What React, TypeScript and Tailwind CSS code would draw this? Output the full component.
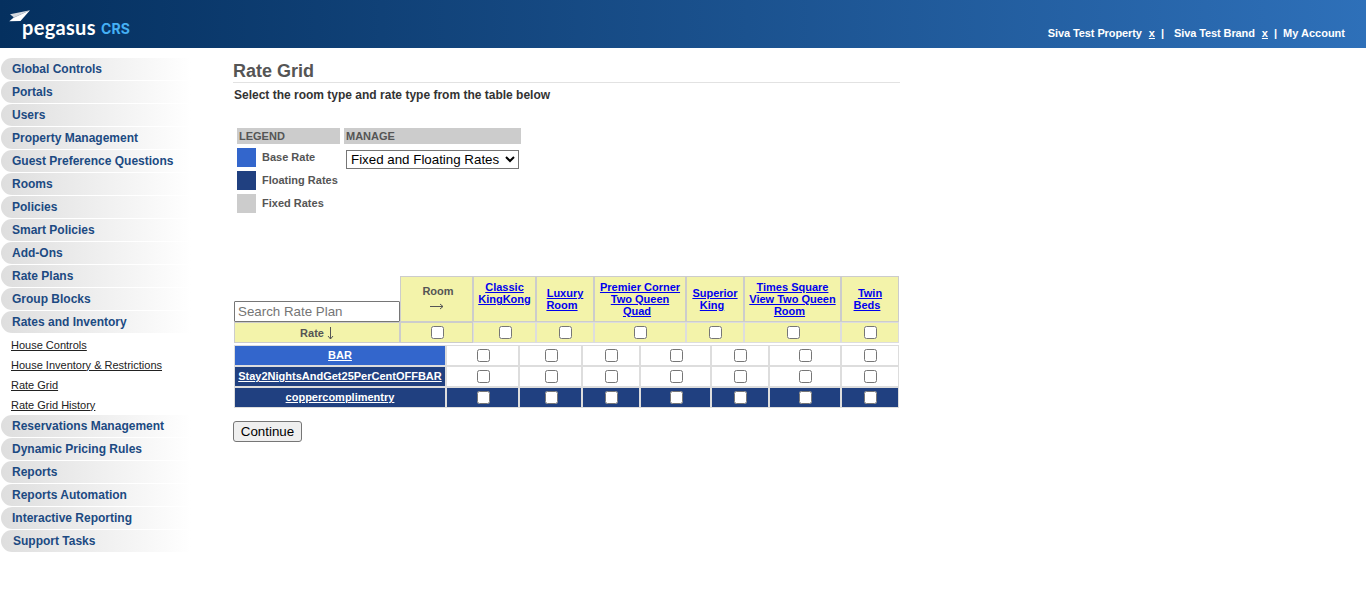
import React from "react";

const menuTop = [
  "Global Controls",
  "Portals",
  "Users",
  "Property Management",
  "Guest Preference Questions",
  "Rooms",
  "Policies",
  "Smart Policies",
  "Add-Ons",
  "Rate Plans",
  "Group Blocks",
  "Rates and Inventory",
];
const subMenu = ["House Controls", "House Inventory & Restrictions", "Rate Grid", "Rate Grid History"];
const menuBottom = [
  "Reservations Management",
  "Dynamic Pricing Rules",
  "Reports",
  "Reports Automation",
  "Interactive Reporting",
];

const rooms = [
  { lines: ["Classic", "KingKong"], box: "pb-[12px]", last: "" },
  { lines: ["Luxury", "Room"], box: "", last: "mr-[6px]" },
  { lines: ["Premier Corner", "Two Queen", "Quad"], box: "", last: "mr-[6px]" },
  { lines: ["Superior", "King"], box: "", last: "mr-[6px]" },
  { lines: ["Times Square", "View Two Queen", "Room"], box: "", last: "mr-[6px]" },
  { lines: ["Twin", "Beds"], box: "", last: "mr-[6px]" },
];

const plans = [
  { name: "BAR", head: "bg-[#3366cc]", cell: "bg-white" },
  { name: "Stay2NightsAndGet25PerCentOFFBAR", head: "bg-[#204080]", cell: "bg-white" },
  { name: "coppercomplimentry", head: "bg-[#204080]", cell: "bg-[#204080]" },
];

function MenuItem({ label, pad = "pl-[11px]" }: { label: string; pad?: string }) {
  return (
    <li className={`mb-px ml-px flex h-[22px] items-center rounded-l-[11px] bg-linear-to-r from-[#dedede] to-white to-[190px] text-[12px] font-bold text-[#1c4a82] ${pad}`}>
      {label}
    </li>
  );
}

function Check() {
  return <input type="checkbox" className="m-0 block h-[13px] w-[13px]" />;
}

function Logo() {
  return (
    <svg width="140" height="48" viewBox="0 0 140 48">
      <path d="M10 14.2L30 10.2L14 17.5Z" fill="#d4d8de" />
      <path d="M30 10.2L14 17.3L9.3 21.3L20.5 21Z" fill="#ffffff" />
      <path d="M30 10.2L14 17.3L12.5 18.6Z" fill="#9aa6b8" />
      <text x="22" y="34.5" fill="#fff" className="font-['Lato',sans-serif] text-[20px] font-bold" textLength="73.5">pegasus</text>
      <text x="101" y="34" fill="#45b0f5" className="font-['Inter',sans-serif] text-[14px] font-bold" textLength="29">CRS</text>
    </svg>
  );
}

export default function App() {
  return (
    <div className="h-[613px] w-[1366px] overflow-hidden bg-white font-['Liberation_Sans',Arial,sans-serif] text-[#4d4d4d]">
      <header className="flex h-12 justify-between bg-linear-to-r from-[#05305f] to-[#2e70b9]">
        <Logo />
        <div className="flex pt-[27px] pr-[21px] text-[11px] leading-[13px] font-bold whitespace-pre text-white">
          <span className="tracking-[-0.1px]">Siva Test Property</span>
          <span className="ml-[7px] underline">x</span>
          <span className="ml-[6px]">|</span>
          <span className="ml-[10px] tracking-[-0.1px]">Siva Test Brand</span>
          <span className="ml-[7px] underline">x</span>
          <span className="ml-[6px]">|</span>
          <span className="ml-[6px]">My Account</span>
        </div>
      </header>
      <div className="flex">
        <nav className="w-[233px] shrink-0 pt-[10px]">
          <ul>
            {menuTop.map((m) => (
              <MenuItem key={m} label={m} />
            ))}
          </ul>
          <ul className="pt-px pl-[11px] text-[11px] text-[#222]">
            {subMenu.map((m) => (
              <li key={m} className="flex h-5 items-center underline">{m}</li>
            ))}
          </ul>
          <ul>
            {menuBottom.map((m) => (
              <MenuItem key={m} label={m} />
            ))}
            <MenuItem label="Support Tasks" pad="pl-[12px]" />
          </ul>
        </nav>
        <main className="w-[667px]">
          <h1 className="mt-[12px] h-[23px] border-b border-[#e2e2e2] text-[18px] leading-[22px] font-bold text-[#555]">Rate Grid</h1>
          <p className="mt-[5px] ml-px text-[12px] leading-[14px] font-bold text-[#333]">
            Select the room type and rate type from the table below
          </p>

          <div className="mt-[26px] ml-[4px] flex gap-[4px] text-[11px] font-bold text-[#555]">
            <section className="w-[103px]">
              <h2 className="h-4 bg-[#ccc] pl-[2px] leading-[16px]">LEGEND</h2>
              <ul className="mt-[4px] flex flex-col gap-[4px] leading-[19px]">
                <li className="flex gap-[6px] whitespace-nowrap"><i className="h-[19px] w-[19px] bg-[#3366cc]" />Base Rate</li>
                <li className="flex gap-[6px] whitespace-nowrap"><i className="h-[19px] w-[19px] bg-[#204080]" />Floating Rates</li>
                <li className="flex gap-[6px] whitespace-nowrap"><i className="h-[19px] w-[19px] bg-[#ccc]" />Fixed Rates</li>
              </ul>
            </section>
            <section className="w-[177px]">
              <h2 className="h-4 bg-[#ccc] pl-[2px] leading-[16px]">MANAGE</h2>
              <select className="mt-[6px] ml-[2px] block h-[19px] w-[173px] border border-[#767676] bg-white text-[13.333px] font-normal text-black">
                <option>Fixed and Floating Rates</option>
              </select>
            </section>
          </div>

          <div className="mt-[63px] ml-px grid w-[665px] grid-cols-[166px_73px_63px_58px_92px_58px_97px_58px] text-center text-[11px] leading-[12px] font-bold">
            <div className="flex items-end">
              <input
                type="text"
                placeholder="Search Rate Plan"
                className="h-[21px] w-[166px] rounded-[1px] border border-[#767676] bg-white px-[3px] text-[13.333px] font-normal placeholder:text-[#757575]"
              />
            </div>
            <div className="flex h-[46px] flex-col items-center border border-[#ccc] bg-[#f3f3aa] pt-[8px] pl-[3px] text-[#555]">
              <span>Room</span>
              <svg width="14" height="7" viewBox="0 0 14 7" className="mt-[6px] mr-[3px]" fill="none" stroke="#555">
                <path d="M0 3.5H13M10 1L13 3.5L10 6" />
              </svg>
            </div>
            {rooms.map(({ lines, box, last }) => (
              <div key={lines.join()} className={`flex h-[46px] flex-col items-center justify-center border border-[#ccc] bg-[#f3f3aa] whitespace-pre text-[#0000ee] ${box}`}>
                {lines.map((l, i) => (
                  <span key={l} className={`underline ${i === lines.length - 1 ? last : ""}`}>{l}</span>
                ))}
              </div>
            ))}
            <div className="flex h-[21px] items-center justify-center gap-[3px] border border-[#ccc] bg-[#f3f3aa] text-[#555]">
              Rate
              <svg width="7" height="13" viewBox="0 0 7 13" fill="none" stroke="#555" className="mt-[2px]">
                <path d="M3.5 0V12M1 9L3.5 12L6 9" />
              </svg>
            </div>
            {Array.from({ length: 7 }, (_, i) => (
              <div key={i} className={`flex h-[21px] items-center justify-center border bg-[#f3f3aa] pl-px ${i === 0 ? "border-[#ccc]" : "border-[#ddd]"}`}>
                <Check />
              </div>
            ))}
          </div>

          <div className="mt-[2px] ml-px w-[665px] text-[11px] font-bold">
            {plans.map((p) => (
              <div key={p.name} className="grid grid-cols-[212px_73px_63px_58px_71px_58px_72px_58px]">
                <div className={`flex h-[21px] items-center justify-center border border-[#ddd] text-white underline ${p.head}`}>{p.name}</div>
                {Array.from({ length: 7 }, (_, i) => (
                  <div key={i} className={`flex h-[21px] items-center justify-center border border-[#ddd] pl-px ${p.cell}`}>
                    <Check />
                  </div>
                ))}
              </div>
            ))}
          </div>
          <button className="mt-[13px] block h-[21px] w-[69px] rounded-[3px] border border-[#767676] bg-[#efefef] text-[13.333px] leading-[19px] text-black">
            Continue
          </button>
        </main>
      </div>
    </div>
  );
}
